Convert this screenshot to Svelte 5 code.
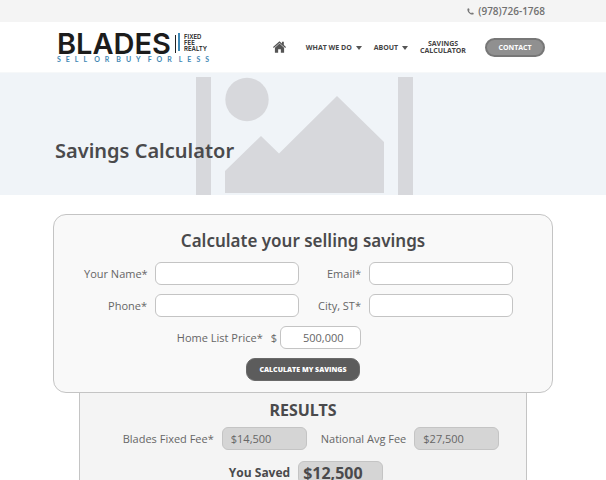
<script lang="ts">
  const BLADES_FEE = 14500;
  const NATIONAL_RATE = 0.055;
  const tagline = ['SELL', 'OR', 'BUY', 'FOR', 'LESS'];

  let name = $state('');
  let email = $state('');
  let phone = $state('');
  let city = $state('');
  let price = $state('500,000');
  let nationalFee = $state(27500);
  let saved = $state(12500);

  function formatMoney(value: number): string {
    return '$' + value.toLocaleString('en-US');
  }

  function calculate(event: SubmitEvent) {
    event.preventDefault();
    const amount = Number(price.replace(/[^0-9.]/g, '')) || 0;
    nationalFee = Math.round(amount * NATIONAL_RATE);
    saved = Math.max(0, nationalFee - BLADES_FEE);
  }
</script>

<div class="topbar">
  <div class="container">
    <a class="phone" href="tel:9787261768">
      <svg viewBox="0 0 16 16" width="7" height="7" aria-hidden="true">
        <path d="M1 1.5 L4.5 0.5 L6 5 L4.2 6.5 C5.2 8.8 7.2 10.8 9.5 11.8 L11 10 L15.5 11.5 L14.5 15 C7 16 0 9 1 1.5 Z" />
      </svg>
      (978)726-1768
    </a>
  </div>
</div>

<header>
  <div class="container header-inner">
    <a class="logo" href="/" aria-label="Blades Fixed Fee Realty">
      <span class="logo-main">
        <span class="logo-name">BLADES</span>
        <svg viewBox="0 0 5 20" width="5" height="20" aria-hidden="true">
          <rect x="0" y="2" width="1" height="18" fill="#222" />
          <rect x="3" y="0" width="2" height="18" fill="#3f88b5" />
        </svg>
        <span class="logo-side">
          <span>FIXED</span>
          <span>FEE</span>
          <span>REALTY</span>
        </span>
      </span>
      <span class="logo-tag">
        {#each tagline as word}
          <span>{word}</span>
        {/each}
      </span>
    </a>
    <nav>
      <a class="home" href="/" aria-label="Home">
        <svg viewBox="0 0 24 21" width="13" height="12" aria-hidden="true">
          <path d="M12 0 L16.5 4 V1 H20 V7 L24 10.6 L22.6 12.2 L12 3 L1.4 12.2 L0 10.6 Z" />
          <path d="M12 4.2 L20.5 11.8 V21 H14.5 V14.5 H9.5 V21 H3.5 V11.8 Z" />
        </svg>
      </a>
      <a href="/what-we-do">WHAT WE DO <i class="caret"></i></a>
      <a class="about" href="/about">ABOUT <i class="caret"></i></a>
      <a class="stacked" href="/savings-calculator">SAVINGS<br />CALCULATOR</a>
      <a class="contact" href="/contact">CONTACT</a>
    </nav>
  </div>
</header>

<section class="banner">
  <svg class="placeholder" viewBox="0 0 218 118" width="218" height="118" aria-hidden="true">
    <rect x="0" y="0" width="15" height="118" />
    <rect x="202" y="0" width="15" height="118" />
    <circle cx="51" cy="22.5" r="21.7" />
    <path d="M29 94 L65 59 L83 76.5 L141 19 L188 65 V116 H29 Z" />
  </svg>
  <div class="container">
    <h1>Savings Calculator</h1>
  </div>
</section>

<main>
  <form class="card" onsubmit={calculate}>
    <h2>Calculate your selling savings</h2>
    <div class="fields">
      <label for="name">Your Name*</label>
      <input id="name" type="text" bind:value={name} />
      <label for="email">Email*</label>
      <input id="email" type="email" bind:value={email} />
      <label for="phone">Phone*</label>
      <input id="phone" type="tel" bind:value={phone} />
      <label for="city">City, ST*</label>
      <input id="city" type="text" bind:value={city} />
      <div class="price">
        <label for="price">Home List Price*</label>
        <span class="dollar">$</span>
        <input id="price" type="text" bind:value={price} />
      </div>
    </div>
    <button type="submit">CALCULATE MY SAVINGS</button>
  </form>

  <section class="results">
    <h2>RESULTS</h2>
    <div class="row fees">
      <label for="blades">Blades Fixed Fee*</label>
      <input id="blades" type="text" readonly value={formatMoney(BLADES_FEE)} />
      <label class="second" for="national">National Avg Fee</label>
      <input id="national" type="text" readonly value={formatMoney(nationalFee)} />
    </div>
    <div class="row saved">
      <label for="saved">You Saved</label>
      <input id="saved" type="text" readonly value={formatMoney(saved)} />
    </div>
  </section>
</main>

<style>
  :global(body) {
    margin: 0;
    background: #fff;
    color: #666;
    font-family: 'Open Sans', 'Noto Sans', sans-serif;
    font-size: 11px;
  }

  a {
    color: inherit;
    text-decoration: none;
  }

  .container {
    box-sizing: border-box;
    width: 100%;
    max-width: 500px;
    margin: 0 auto;
    padding: 0 8px 0 4px;
  }

  .topbar {
    background: #f4f4f4;
  }

  .topbar .container {
    display: flex;
    justify-content: flex-end;
  }

  .phone {
    display: flex;
    align-items: center;
    gap: 4px;
    line-height: 22px;
    font-size: 10px;
    font-weight: 600;
    color: #707070;
  }

  .phone svg {
    fill: #777;
  }

  header {
    background: #fff;
    border-bottom: 1px solid #f6f8f9;
  }

  .header-inner {
    display: flex;
    align-items: center;
    justify-content: space-between;
    height: 50px;
  }

  .logo {
    display: flex;
    flex-direction: column;
    gap: 1px;
    color: #1c1c1c;
  }

  .logo-main {
    display: flex;
    align-items: center;
    gap: 4px;
    font-family: Inter, sans-serif;
    font-weight: 600;
  }

  .logo-name {
    font-size: 29px;
    line-height: 23px;
  }

  .logo-side {
    display: flex;
    flex-direction: column;
    font-size: 6px;
    line-height: 6px;
  }

  .logo-tag {
    display: flex;
    gap: 2px;
    font-family: Lato, sans-serif;
    font-size: 7px;
    line-height: 7px;
    font-weight: 700;
    letter-spacing: 5px;
    white-space: nowrap;
    color: #3f88b5;
  }

  nav {
    display: flex;
    align-items: center;
    font-size: 7px;
    line-height: 7px;
    font-weight: 700;
    color: #444;
    white-space: nowrap;
  }

  .home {
    margin-right: 20px;
  }

  .home svg {
    display: block;
    fill: #555;
  }

  .caret {
    display: inline-block;
    margin-left: 2px;
    border: 3px solid transparent;
    border-top: 4px solid #555;
    border-bottom: 0;
    vertical-align: middle;
  }

  .about {
    margin: 0 12px;
  }

  .stacked {
    text-align: center;
  }

  .contact {
    box-sizing: border-box;
    width: 60px;
    margin-left: 19px;
    border: 2px solid #777;
    border-radius: 10px;
    background: #909090;
    color: #fff;
    line-height: 15px;
    text-align: center;
  }

  .banner {
    display: grid;
    height: 122px;
    background: #f0f4f8;
  }

  .banner > * {
    grid-area: 1 / 1;
  }

  .placeholder {
    align-self: end;
    justify-self: center;
    margin-left: 4px;
    fill: #d7d8dc;
  }

  .banner .container {
    z-index: 1;
    padding: 64px 2px 0;
  }

  h1,
  h2 {
    margin: 0;
    color: #4a4a4c;
    font-family: 'Noto Sans', 'Open Sans', sans-serif;
    font-weight: 600;
  }

  h1 {
    font-size: 20px;
    line-height: 28px;
  }

  h2 {
    font-size: 17px;
    line-height: 24px;
    text-align: center;
  }

  main {
    max-width: 500px;
    margin: 19px auto 0;
  }

  .card {
    display: flex;
    flex-direction: column;
    border: 1px solid #c4c4c4;
    border-radius: 13px;
    padding: 14px 0 11px;
    background: #f9f9f9;
  }

  .fields {
    display: grid;
    grid-template-columns: 63px 1fr 54px 1fr;
    align-items: center;
    gap: 9px 8px;
    padding: 9px 39px 9px 30px;
  }

  label {
    text-align: right;
    white-space: nowrap;
  }

  input {
    box-sizing: border-box;
    width: 100%;
    min-width: 0;
    height: 23px;
    border: 1px solid #c4c4c4;
    border-radius: 6px;
    padding: 0 8px;
    background: #fff;
    color: #666;
    font: inherit;
  }

  .price {
    display: flex;
    grid-column: 1 / 4;
    align-items: center;
    justify-content: flex-end;
  }

  .dollar {
    margin: 0 3px 0 8px;
  }

  .price input {
    width: 81px;
    padding-left: 22px;
  }

  button {
    align-self: center;
    height: 23px;
    border: 1px solid #6a6a6a;
    border-radius: 9px;
    padding: 0 12px;
    background: #5c5c5c;
    color: #fff;
    font: inherit;
    font-size: 7px;
    font-weight: 800;
  }

  .results {
    margin: 0 26px;
    border: 1px solid #c4c4c4;
    border-top: 0;
    padding: 5px 0 20px;
    background: #f4f4f4;
  }

  .results h2 {
    font-size: 16px;
    font-weight: 700;
  }

  .row {
    display: flex;
    align-items: center;
    justify-content: center;
    gap: 8px;
  }

  .row input {
    width: 85px;
    background: #d5d5d5;
  }

  .fees {
    margin-top: 5px;
    padding-left: 16px;
  }

  .second {
    margin-left: 6px;
  }

  .saved {
    margin-top: 11px;
    padding-left: 6px;
    color: #4a4a4c;
    font-size: 12px;
    font-weight: 700;
  }

  .saved input {
    padding: 0 4px;
    color: #4a4a4c;
    font-size: 16px;
  }
</style>
